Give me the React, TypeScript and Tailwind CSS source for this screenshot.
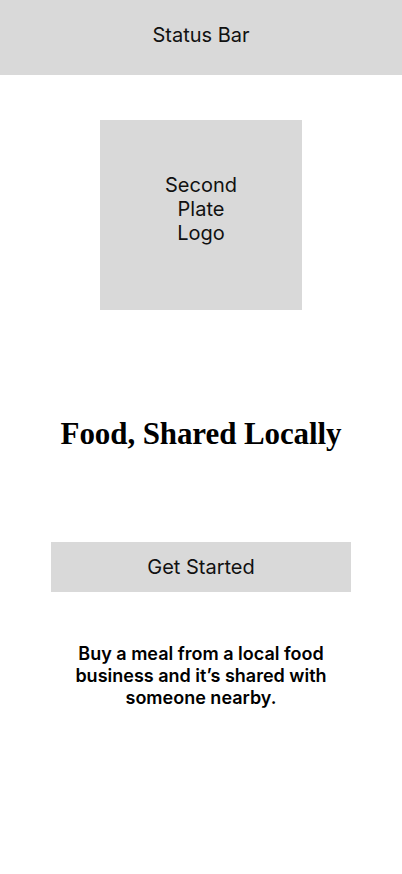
export default function App() {
  return (
    <div className="min-h-[874px] w-full bg-white flex flex-col items-center font-['Inter',sans-serif] text-black">
      {/* Status bar placeholder */}
      <div className="w-full h-[75px] pb-[5px] bg-[#d9d9d9] flex items-center justify-center text-[20px] text-[#111]">
        Status Bar
      </div>

      {/* Logo placeholder */}
      <div className="mt-[45px] w-[202px] h-[190px] pb-[12px] bg-[#d9d9d9] flex items-center justify-center text-center text-[20px] leading-[24px] text-[#111]">
        Second
        <br />
        Plate
        <br />
        Logo
      </div>

      <h1 className="mt-[106px] font-['Liberation_Serif',serif] font-bold text-[31px] leading-[36px] tracking-[-0.1px]">
        Food, Shared Locally
      </h1>

      <button className="mt-[90px] w-[300px] h-[50px] bg-[#d9d9d9] text-[20px] text-[#111]">
        Get Started
      </button>

      <p className="mt-[51px] w-[270px] text-center text-[18px] leading-[22px] font-semibold">
        Buy a meal from a local food business and it’s shared with someone nearby.
      </p>
    </div>
  );
}
